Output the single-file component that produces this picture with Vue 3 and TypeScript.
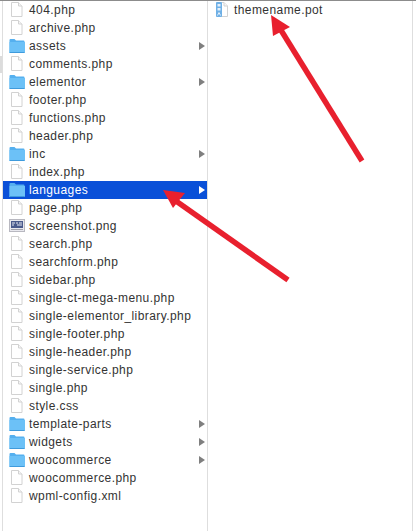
<script setup lang="ts">
interface Item { name: string; kind: 'file' | 'folder' | 'image'; selected?: boolean }
const f = (name: string): Item => ({ name, kind: 'file' })
const d = (name: string, selected = false): Item => ({ name, kind: 'folder', selected })
const items: Item[] = [
  f('404.php'), f('archive.php'), d('assets'), f('comments.php'), d('elementor'),
  f('footer.php'), f('functions.php'), f('header.php'), d('inc'), f('index.php'),
  d('languages', true), f('page.php'), { name: 'screenshot.png', kind: 'image' },
  f('search.php'), f('searchform.php'), f('sidebar.php'), f('single-ct-mega-menu.php'),
  f('single-elementor_library.php'), f('single-footer.php'), f('single-header.php'),
  f('single-service.php'), f('single.php'), f('style.css'), d('template-parts'),
  d('widgets'), d('woocommerce'), f('woocommerce.php'), f('wpml-config.xml'),
]
</script>

<template>
  <div class="window">
    <div class="scroll-mark"></div>
    <ul class="column first">
      <li v-for="item in items" :key="item.name" class="row" :class="{ selected: item.selected }">
        <svg class="icon" width="16" height="16" viewBox="0 0 16 16">
          <template v-if="item.kind === 'file'">
            <path d="M2.5 0.5h7l3.5 3.5v10.5h-10.5z" fill="#fff" stroke="#d2d2d2" />
            <path d="M9.5 0.5v3.5h3.5" fill="#f6f6f6" stroke="#d2d2d2" />
          </template>
          <template v-else-if="item.kind === 'folder'">
            <path d="M0.5 14V2q0-1 1-1h4l1.5 1.5h7.5q1 0 1 1V14q0 1-1 1h-13.500q-1 0-1-1z" fill="#55b0ef" />
            <path d="M0.500 4h15.500v10q0 1-1 1h-13.500q-1 0-1-1z" fill="#6cc1f7" />
            <path d="M1 14.500h14.500" stroke="#3f9bdc" />
          </template>
          <template v-else>
            <rect x="0.5" y="1.500" width="15" height="12" fill="#e8e8ee" stroke="#b8b8c0" />
            <rect x="2" y="3" width="12" height="7" fill="#4a5a8c" />
            <path d="M3 5h3M7 5h2M10 5h3M3 7h2M8 7h5" stroke="#e6e9f2" />
            <rect x="2" y="11" width="12" height="1" fill="#a0a0aa" />
          </template>
        </svg>
        <span class="name">{{ item.name }}</span>
        <span v-if="item.kind === 'folder'" class="chevron"></span>
      </li>
    </ul>
    <ul class="column second">
      <li class="row">
        <svg class="icon" width="16" height="16" viewBox="0 0 16 16">
          <path d="M1 0.500h7l3.500 3.500v10.500h-10.500z" fill="#fff" stroke="#d2d2d2" />
          <path d="M8 0.500v3.500h3.500" fill="#f6f6f6" stroke="#d2d2d2" />
          <rect x="0" y="0" width="6" height="15" rx="1" fill="#6fb0e6" />
          <rect x="1.500" y="2" width="3" height="2.500" fill="#e4f0fb" />
          <rect x="1.500" y="6" width="3" height="2.500" fill="#e4f0fb" />
          <path d="M1.500 13.500l1.500-3 1.500 3" fill="none" stroke="#e4f0fb" />
        </svg>
        <span class="name">themename.pot</span>
      </li>
    </ul>
    <svg class="arrows" width="416" height="531" viewBox="0 0 416 531">
      <path d="M362 161L279 27" stroke="#e8202e" stroke-width="5.500" fill="none" />
      <path d="M271 15L290 27L273 36z" fill="#e8202e" />
      <path d="M288 280L176 201" stroke="#e8202e" stroke-width="5.500" fill="none" />
      <path d="M163 190L185 193L173 208z" fill="#e8202e" />
    </svg>
  </div>
</template>

<style>
html, body { margin: 0; background: #fff; }
</style>

<style scoped>
.window {
  position: relative;
  width: 416px;
  height: 531px;
  box-sizing: border-box;
  border-top: 1px solid #8c8c8c;
  display: flex;
  padding-left: 2px;
  padding-right: 3px;
  overflow: hidden;
  font-family: "Liberation Sans", Arial, sans-serif;
  font-size: 12px;
  letter-spacing: 0.42px;
  color: #333;
}
.scroll-mark {
  position: absolute;
  left: 0;
  top: 55px;
  width: 2px;
  height: 17px;
  background: #dcdcdc;
}
.column {
  list-style: none;
  margin: 0;
  padding: 0;
  border-left: 1px solid #dedede;
}
.first { width: 204px; }
.second { flex: 1; border-right: 1px solid #dedede; }
.row {
  height: 18px;
  display: flex;
  align-items: center;
  padding-left: 6px;
  padding-right: 2px;
}
.second .row { padding-left: 8px; }
.second .icon { margin-right: 2px; }
.icon { flex: none; margin-right: 4px; }
.name { flex: 1; white-space: nowrap; }
.chevron {
  width: 0;
  height: 0;
  border-left: 6px solid #7f7f7f;
  border-top: 4px solid transparent;
  border-bottom: 4px solid transparent;
}
.selected { background: #0a50d8; color: #fff; }
.selected .chevron { border-left-color: #fff; }
.arrows { position: absolute; left: 0; top: -1px; pointer-events: none; }
</style>
